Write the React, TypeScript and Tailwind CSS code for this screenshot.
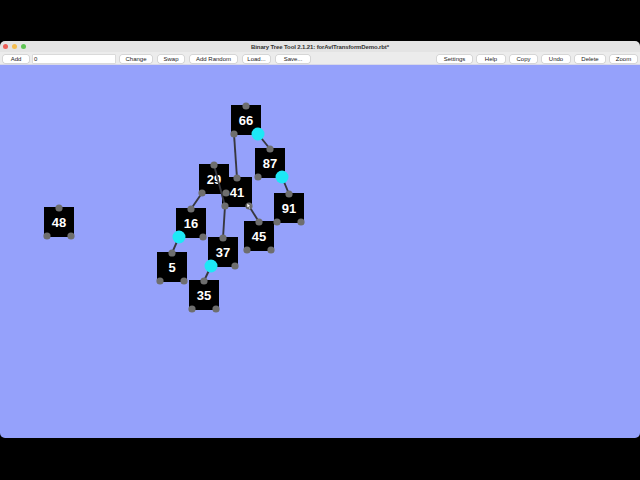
import React from "react";

type N = { v: string; x: number; y: number };
const OY = 65;
const nodes: N[] = [
  { v: "48", x: 44, y: 207 },
  { v: "66", x: 231, y: 105 },
  { v: "87", x: 255, y: 148 },
  { v: "91", x: 274, y: 193 },
  { v: "29", x: 199, y: 164 },
  { v: "41", x: 222, y: 177 },
  { v: "45", x: 244, y: 221 },
  { v: "16", x: 176, y: 208 },
  { v: "5", x: 157, y: 252 },
  { v: "37", x: 208, y: 237 },
  { v: "35", x: 189, y: 280 },
];

const lines: [number, number, number, number][] = [
  [234, 134, 237, 178],
  [258, 134, 270, 149],
  [282, 177, 289, 194],
  [225, 206, 214, 165],
  [225, 206, 223, 238],
  [249, 206, 259, 222],
  [202, 193, 191, 209],
  [179, 237, 172, 253],
  [211, 266, 204, 281],
];

const cyan = new Set(["66-BR", "87-BR", "16-BL", "37-BL"]);

const leftButtons = ["Change", "Swap", "Add Random", "Load...", "Save..."];
const rightButtons = ["Settings", "Help", "Copy", "Undo", "Delete", "Zoom"];

function Btn({ label, w }: { label: string; w: string }) {
  return (
    <div
      className={`${w} h-[8px] bg-white rounded-[2px] shadow-[0_0_0_0.5px_rgba(0,0,0,0.18)] flex items-center justify-center text-[6px] leading-none text-[#222]`}
    >
      {label}
    </div>
  );
}

const leftW = ["w-[32px]", "w-[26px]", "w-[47px]", "w-[27px]", "w-[34px]"];
const rightW = ["w-[35px]", "w-[28px]", "w-[27px]", "w-[28px]", "w-[30px]", "w-[27px]"];

export default function App() {
  return (
    <div
      className="w-[640px] h-[480px] bg-black flex flex-col"
      style={{ fontFamily: '"Liberation Sans", Arial, sans-serif' }}
    >
      <div className="h-[41px] shrink-0" />
      <div className="h-[397px] shrink-0 flex flex-col rounded-[5px] overflow-hidden">
        <div className="h-[11px] shrink-0 bg-[#e4e4e4] relative flex items-center justify-center">
          <div className="absolute left-[3px] top-[3px] flex gap-[4px]">
            <div className="w-[5px] h-[5px] rounded-full bg-[#ed5f57]" />
            <div className="w-[5px] h-[5px] rounded-full bg-[#f4bd4f]" />
            <div className="w-[5px] h-[5px] rounded-full bg-[#5fc454]" />
          </div>
          <span className="text-[6px] font-bold text-[#333] leading-none tracking-[-0.12px] mt-[1px]">
            Binary Tree Tool 2.1.21: forAvlTransformDemo.rbt*
          </span>
        </div>
        <div className="h-[13px] shrink-0 bg-[#ececec] flex items-center pl-[3px] pr-[3px] pt-[1px] border-b border-[#d8d8e8]">
          <Btn label="Add" w="w-[26px]" />
          <div className="ml-[4px] w-[82px] h-[8px] bg-white shadow-[0_0_0_0.5px_rgba(0,0,0,0.15)] flex items-center pl-[1px] text-[6px] leading-none text-[#222]">
            0
          </div>
          <div className="ml-[5px] flex gap-[6px]">
            {leftButtons.map((b, i) => (
              <Btn key={b} label={b} w={leftW[i]} />
            ))}
          </div>
          <div className="ml-auto flex gap-[5px]">
            {rightButtons.map((b, i) => (
              <Btn key={b} label={b} w={rightW[i]} />
            ))}
          </div>
        </div>
        <div className="flex-1 bg-[#95a1fb] relative">
          {nodes.map((n) => (
            <div
              key={n.v}
              className="absolute w-[30px] h-[30px] bg-black flex items-center justify-center text-white font-bold text-[13px] leading-none"
              style={{ left: n.x, top: n.y - OY }}
            >
              {n.v}
            </div>
          ))}
          <svg className="absolute inset-0" width="640" height="373" viewBox={`0 ${OY} 640 373`}>
            {lines.map((l, i) => (
              <line key={i} x1={l[0]} y1={l[1]} x2={l[2]} y2={l[3]} stroke="#38383f" strokeWidth="1.9" />
            ))}
            {nodes.map((n) => {
              const pts: [string, number, number][] = [
                ["T", n.x + 15, n.y + 1],
                ["BL", n.x + 3, n.y + 29],
                ["BR", n.x + 27, n.y + 29],
              ];
              return pts.map(([k, cx, cy]) =>
                cyan.has(`${n.v}-${k}`) ? (
                  <circle key={n.v + k} cx={cx} cy={cy} r="6.5" fill="#1ee8f6" />
                ) : (
                  <circle key={n.v + k} cx={cx} cy={cy} r="3.6" fill="#6e6e6e" />
                )
              );
            })}
            <path d="M247 203 l0 5 l1.3 -1.2 l1.2 2.4 l0.9 -0.5 l-1.1 -2.3 l1.8 0 z" fill="#fff" stroke="#222" strokeWidth="0.4" />
          </svg>
        </div>
      </div>
      <div className="flex-1" />
    </div>
  );
}
